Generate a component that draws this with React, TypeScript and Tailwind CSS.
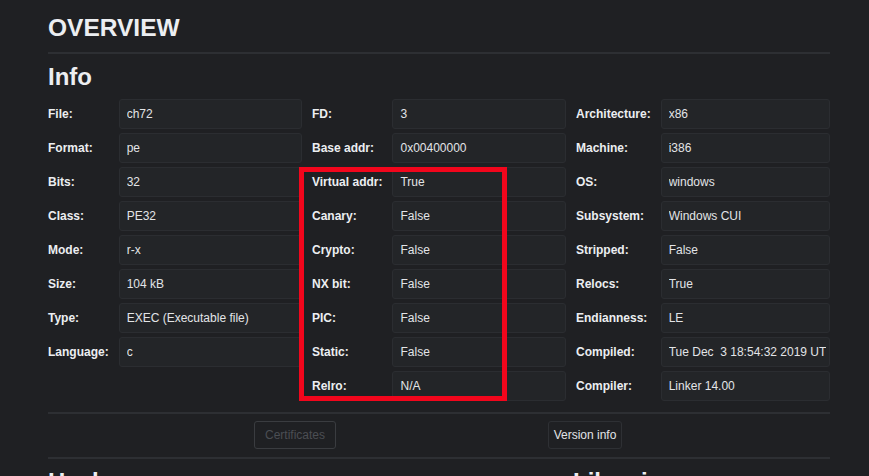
import React from "react";

type Row = [string, string];

const COL1: Row[] = [
  ["File:", "ch72"],
  ["Format:", "pe"],
  ["Bits:", "32"],
  ["Class:", "PE32"],
  ["Mode:", "r-x"],
  ["Size:", "104 kB"],
  ["Type:", "EXEC (Executable file)"],
  ["Language:", "c"],
];

const COL2: Row[] = [
  ["FD:", "3"],
  ["Base addr:", "0x00400000"],
  ["Virtual addr:", "True"],
  ["Canary:", "False"],
  ["Crypto:", "False"],
  ["NX bit:", "False"],
  ["PIC:", "False"],
  ["Static:", "False"],
  ["Relro:", "N/A"],
];

const COL3: Row[] = [
  ["Architecture:", "x86"],
  ["Machine:", "i386"],
  ["OS:", "windows"],
  ["Subsystem:", "Windows CUI"],
  ["Stripped:", "False"],
  ["Relocs:", "True"],
  ["Endianness:", "LE"],
  ["Compiled:", "Tue Dec  3 18:54:32 2019 UTC"],
  ["Compiler:", "Linker 14.00"],
];

function InfoTable({ rows }: { rows: Row[] }) {
  return (
    <div className="grid grid-cols-[auto_1fr] gap-y-[4px] content-start">
      {rows.map(([label, value]) => (
        <React.Fragment key={label}>
          <div className="h-[30px] flex items-center pr-[10px] text-[12px] font-bold text-[#eceef1] whitespace-nowrap">
            {label}
          </div>
          <div className="h-[30px] min-w-0 flex items-center pl-[7px] pr-[3px] bg-[#232528] border border-[#2b2d31] rounded-[3px] text-[12px] text-[#e2e4e7]">
            <span className="block w-full whitespace-pre overflow-hidden">{value}</span>
          </div>
        </React.Fragment>
      ))}
    </div>
  );
}

function Divider() {
  return <div className="h-[2px] bg-[#2d2f33]" />;
}

export default function App() {
  return (
    <div className="min-h-screen bg-[#1f2023] font-['Liberation_Sans',Arial,sans-serif] text-[#eceef1] overflow-hidden">
      <div className="w-[782px] ml-[48px] pt-[13px]">
        <h1 className="text-[24.5px] leading-[29px] font-bold">OVERVIEW</h1>
        <div className="mt-[10px]">
          <Divider />
        </div>
        <h2 className="mt-[8px] text-[24px] leading-[29px] font-bold">Info</h2>

        <div className="mt-[8px] grid grid-cols-3 gap-x-[10px]">
          <InfoTable rows={COL1} />
          <div className="relative">
            <InfoTable rows={COL2} />
            {/* annotation box drawn over the security flags */}
            <div className="absolute left-[-13px] top-[68px] w-[208px] h-[234px] border-[5px] border-[#f2061c] pointer-events-none" />
          </div>
          <InfoTable rows={COL3} />
        </div>

        <div className="mt-[11px]">
          <Divider />
        </div>
        <div className="mt-[7px] flex">
          <button
            disabled
            className="ml-[206px] w-[82px] h-[28px] border border-[#3a3c40] rounded-[3px] text-[12px] text-[#4b4e53]"
          >
            Certificates
          </button>
          <button className="ml-[212px] w-[74px] h-[28px] border border-[#2e3034] rounded-[3px] text-[12px] text-[#e2e4e7]">
            Version info
          </button>
        </div>
        <div className="mt-[8px]">
          <Divider />
        </div>

        <div className="mt-[8px] flex">
          <h2 className="w-[525px] text-[24px] leading-[29px] font-bold">Hashes</h2>
          <h2 className="text-[24px] leading-[29px] font-bold">Libraries</h2>
        </div>
      </div>
    </div>
  );
}
